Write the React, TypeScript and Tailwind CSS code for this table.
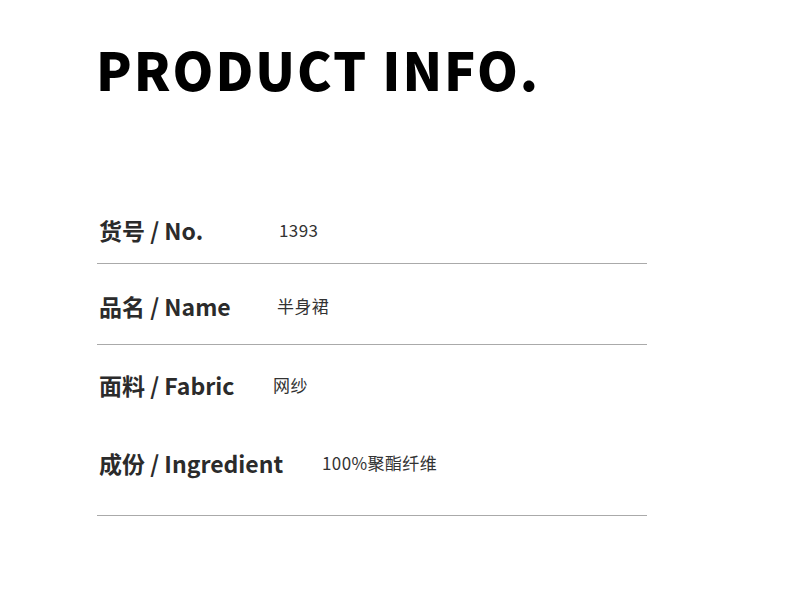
const rows = [
  { label: "货号 / No.", value: "1393", labelW: "w-[180px]", pad: "pt-[18px] pb-[18px]", line: true },
  { label: "品名 / Name", value: "半身裙", labelW: "w-[178px]", pad: "pt-[27px] pb-[23px]", line: true },
  { label: "面料 / Fabric", value: "网纱", labelW: "w-[174px]", pad: "pt-[25px] pb-[24px]", line: false },
  { label: "成份 / Ingredient", value: "100%聚酯纤维", labelW: "w-[223px]", pad: "pt-[24px] pb-[37px]", line: true },
];

export default function App() {
  return (
    <div className="w-[790px] h-[603px] bg-white font-['Noto_Sans_CJK_SC',sans-serif]">
      <div className="pl-[96px] pt-[39px]">
        <h1 className="text-[52px] leading-[60px] font-black text-black tracking-[2px]">
          PRODUCT INFO.
        </h1>
      </div>

      <div className="ml-[97px] mt-[98px] w-[550px] flex flex-col">
        {rows.map((row) => (
          <div
            key={row.label}
            className={`flex items-center pl-[2px] ${row.pad} ${
              row.line ? "border-b border-[#aaaaaa]" : ""
            }`}
          >
            <div className={`${row.labelW} shrink-0 text-[23px] leading-[30px] font-bold text-[#2b2b2b]`}>
              {row.label}
            </div>
            <div className="text-[17px] leading-[30px] tracking-[0.4px] text-[#333333]">{row.value}</div>
          </div>
        ))}
      </div>
    </div>
  );
}
